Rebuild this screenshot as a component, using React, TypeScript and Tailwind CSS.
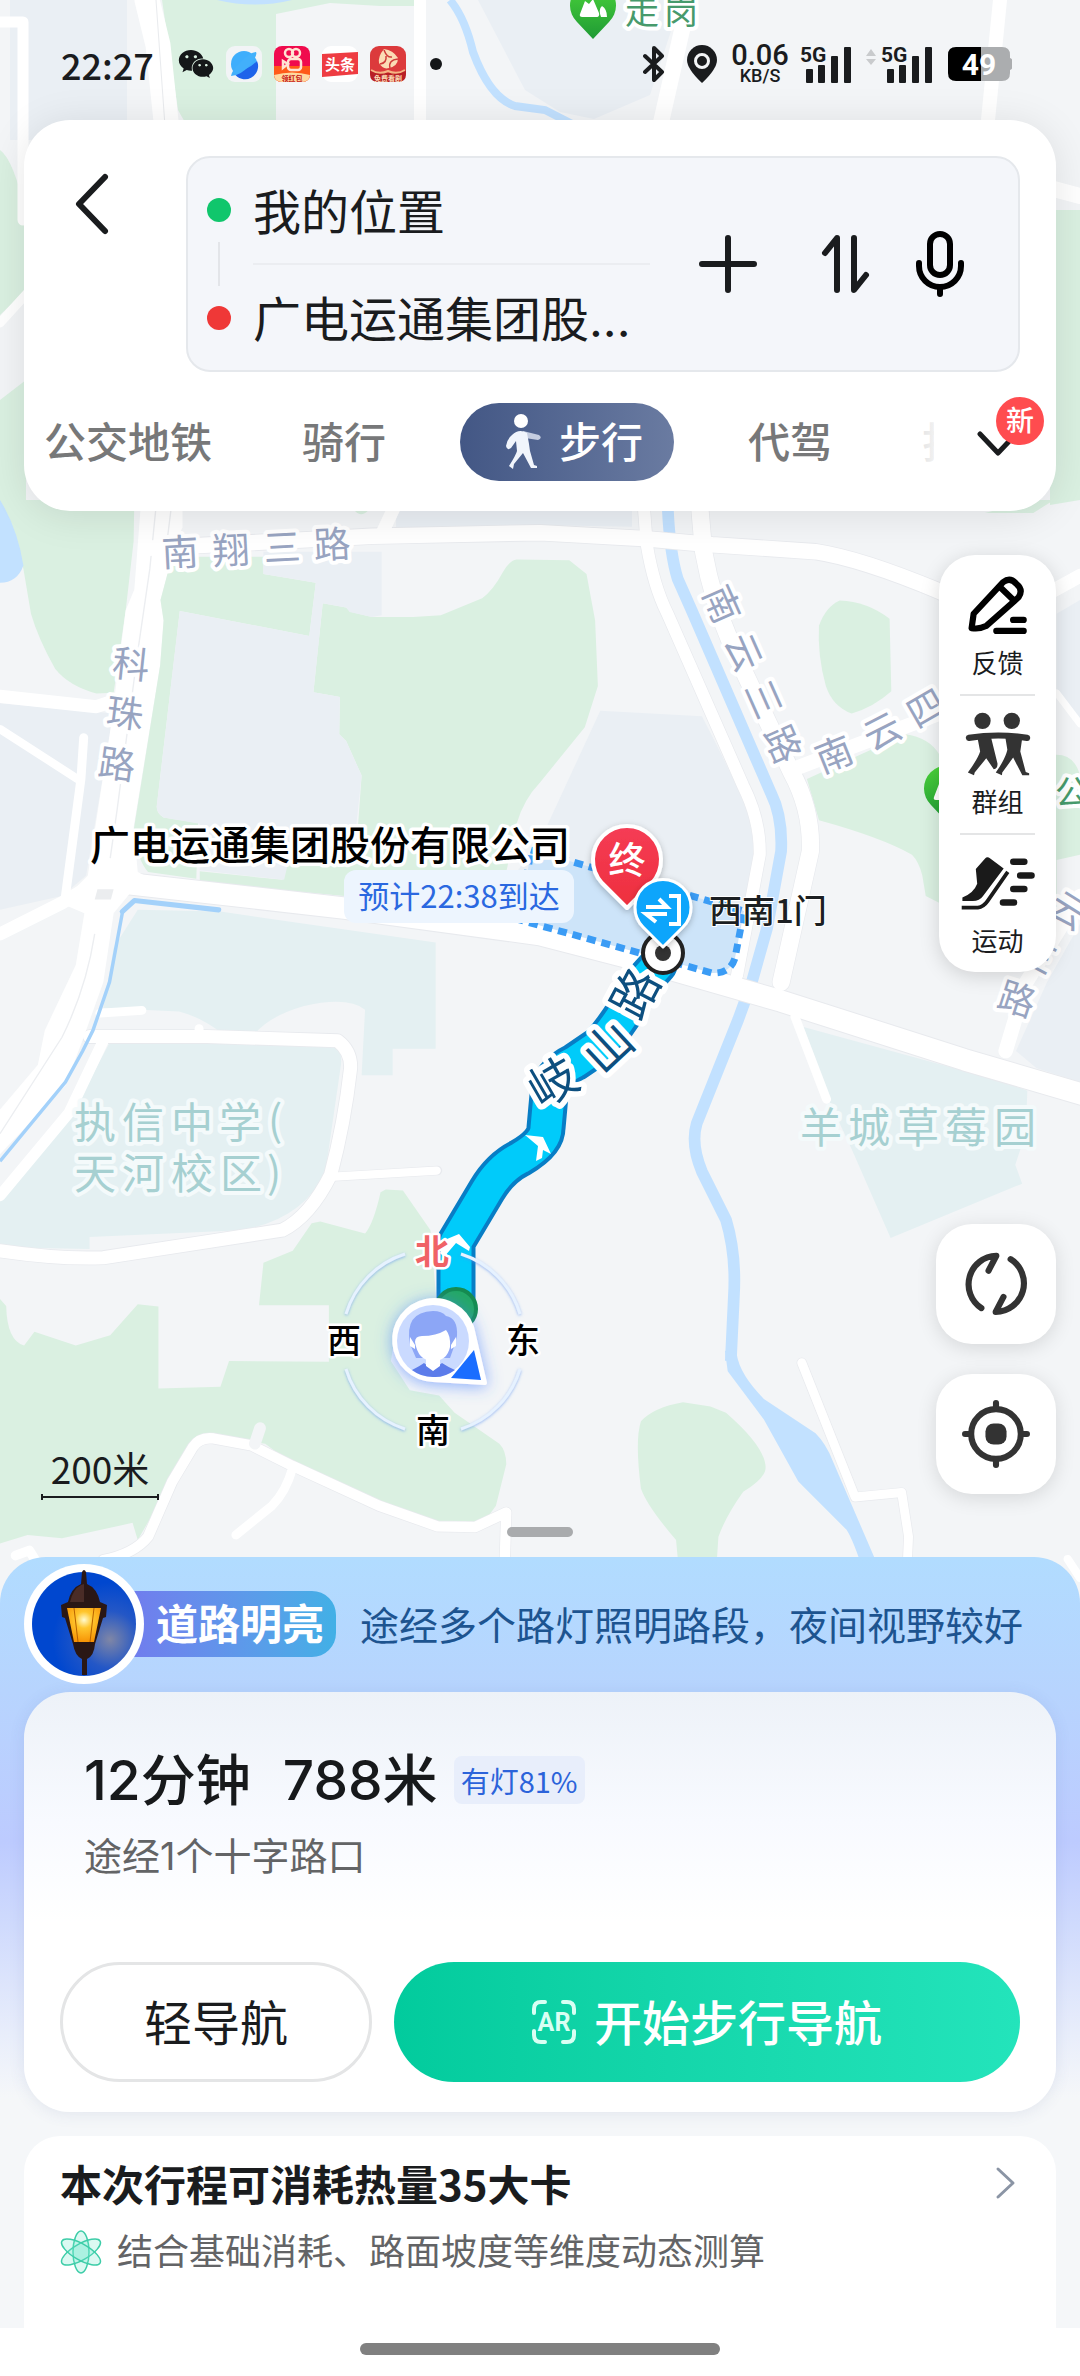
import type { ReactNode } from "react";
import { FaWeixin } from "react-icons/fa";

const SANS = "font-['Inter','Noto_Sans_CJK_SC',sans-serif]";
const CJK = "font-['Noto_Sans_CJK_SC',sans-serif]";

type Glyph = { ch: string; x: number; y: number; r?: number };

function Glyphs({
  items,
  size,
  color,
  halo = "#ffffff",
  haloWidth = 8,
  weight = 400,
}: {
  items: Glyph[];
  size: number;
  color: string;
  halo?: string;
  haloWidth?: number;
  weight?: number;
}) {
  return (
    <g
      fontSize={size}
      fill={color}
      stroke={halo}
      strokeWidth={haloWidth}
      strokeLinejoin="round"
      paintOrder="stroke"
      fontWeight={weight}
      textAnchor="middle"
    >
      {items.map((g, i) => (
        <text key={i} transform={`translate(${g.x} ${g.y}) rotate(${g.r ?? 0})`} dy="0.37em">
          {g.ch}
        </text>
      ))}
    </g>
  );
}

function ParkPin({ x, y }: { x: number; y: number }) {
  return (
    <g transform={`translate(${x} ${y})`}>
      <path d="M0 32 L-16 15 A23 23 0 1 1 16 15 Z" fill="url(#park)" />
      <path d="M-13 7 L-8 -6 L-4 -3 L0 -8 L6 6 Q7 10 3 10 H-11 Q-14 10 -13 7Z M8 10 Q5 2 9 -1 Q14 2 14 10Z" fill="#fff" />
    </g>
  );
}

const ROAD = { stroke: "#ffffff", fill: "none", strokeLinejoin: "round", strokeLinecap: "round" } as const;

function MapCanvas() {
  return (
    <svg
      className={`absolute inset-0 h-full w-full ${CJK}`}
      viewBox="0 0 1080 1600"
      preserveAspectRatio="xMidYMin slice"
      role="img"
      aria-label="步行路线地图"
    >
      <defs>
        <linearGradient id="park" x1="0" y1="0" x2="0" y2="1">
          <stop offset="0" stopColor="#4bd43a" />
          <stop offset="1" stopColor="#1f9a35" />
        </linearGradient>
        <linearGradient id="endpin" x1="0" y1="0" x2="0" y2="1">
          <stop offset="0" stopColor="#f53c55" />
          <stop offset="1" stopColor="#ee2f3d" />
        </linearGradient>
        <filter id="glow" x="-50%" y="-50%" width="200%" height="200%">
          <feDropShadow dx="0" dy="2" stdDeviation="8" floodColor="#3f7dff" floodOpacity="0.6" />
        </filter>
        <filter id="ring" x="-20%" y="-20%" width="140%" height="140%">
          <feDropShadow dx="0" dy="1" stdDeviation="1.5" floodColor="#4f8cf0" floodOpacity="0.6" />
        </filter>
        <filter id="soft" x="-50%" y="-50%" width="200%" height="200%">
          <feDropShadow dx="0" dy="2" stdDeviation="3" floodColor="#000" floodOpacity="0.25" />
        </filter>
      </defs>
      <rect width="1080" height="1600" fill="#f3f5f7" />

      {/* northern strip */}
      <rect x="10" y="0" width="117" height="140" fill="#eaeff4" />
      <path d="M162 0 H414 V6 L380 6 L330 3 L276 14 V140 H195 L178 110Z" fill="#daf0e1" />
      <path d="M217 0 Q255 9 292 0Z" fill="#c2e1ff" />
      <path d="M478 0 L525 90 L560 112 L594 119 L650 95 L672 28 L676 0Z" fill="#eaeff4" />
      <path d="M0 150 Q14 160 26 215 V290 L0 315Z M26 380 L0 400 V520 H26Z" fill="#daf0e1" />
      <path d="M1050 210 H1080 V500 L1050 505Z" fill="#daf0e1" />
      <path d="M450 0 Q465 18 473 52 Q490 98 515 106 L545 110 L580 128" stroke="#c2e1ff" strokeWidth="8" fill="none" />
      <g {...ROAD}>
        <path d="M0 22 H23 V220" strokeWidth="11" />
        <path d="M147 0 L158 45 L168 140" strokeWidth="25" />
        <path d="M156 0 L166 140" stroke="#e9ebee" strokeWidth="1" />
        <path d="M420 0 V140" strokeWidth="12" />
        <path d="M690 0 L682 30 L657 140" strokeWidth="16" />
        <path d="M1000 0 L986 140" strokeWidth="14" />
        <path d="M0 323 L30 290" strokeWidth="9" />
        <path d="M1050 188 L1080 196" strokeWidth="16" />
      </g>

      <g transform="translate(0 500) scale(0.3444)">
        {/* land use */}
        <g fill="#daf0e1">
          <path d="M0 0 L390 0 L388 120 L365 320 L330 560 L280 562 Q200 540 160 490 Q110 400 90 330 L68 200 Q40 80 0 0Z" />
          <path d="M937 300 L1005 312 L1020 325 L1080 340 L1200 340 L1280 335 L1400 285 Q1430 265 1460 210 Q1480 175 1500 173 L1653 175 L1703 215 L1728 350 L1736 540 L1698 660 L1568 820 Q1520 870 1500 940 L1470 1080 L1400 1180 L1000 1150 L580 1110 L580 1078 L820 1103 L830 1060 L1040 940 L1050 800 L1005 700 L985 680 L987 572 L910 558Z" />
          <path d="M2438 292 Q2518 295 2583 345 L2588 555 Q2538 600 2473 620 Q2418 600 2398 540 Q2373 450 2378 365 Q2398 310 2438 292Z" />
          <path d="M2343 810 L2628 680 Q2700 690 2728 740 H3068 Q3120 740 3136 800 V1030 L3068 1045 V1180 L2728 1170 L2688 1150 L2678 1090 Q2668 1050 2648 1030 Q2560 980 2378 930Z" />
          <path d="M1025 25 Q1045 55 1070 30Z M3000 0 H3060 L3000 38 H2860Z" />
          <path d="M0 2320 L18 2340 Q20 2440 70 2455 L100 2415 L220 2455 L320 2425 L400 2335 L460 2342 V2580 L640 2575 L665 2500 L955 2502 V2338 L752 2338 L765 2215 L850 2180 L905 2100 L930 2095 L1060 2130 Q1085 2100 1105 2010 L1120 2002 L1170 2005 L1250 2120 L1270 2360 L1150 2410 L1135 2500 L1190 2585 L1275 2600 L1320 2650 L1450 2740 Q1470 2760 1470 2800 L1440 2920 L1400 2975 L1250 2965 L850 2800 L770 2740 L735 2735 L600 2710 L560 2740 L480 2880 L400 3020 L385 2970 L180 3015 L80 3005 L0 3030Z" />
          <path d="M1983 2620 Q1898 2635 1861 2675 Q1843 2730 1861 2870 Q1878 2920 1963 3020 L1976 3160 H2076 L2086 3010 Q2108 2950 2158 2880 Q2223 2840 2223 2810 Q2223 2750 2108 2650 L2063 2632Z" />
        </g>
        <path d="M0 0 Q50 80 68 190 Q50 240 0 240Z" fill="#c2e1ff" />
        <g fill="#eaeff4">
          <path d="M1150 0 H1835 V78 L1500 72 L1150 85Z" />
          <path d="M0 590 L330 620 L250 1090 L180 1150 L0 1190Z" />
          <path d="M1743 612 L2038 628 Q2128 800 2168 900 Q2193 980 2188 1080 L2158 1200 H1500 V1080 L1568 990Z" />
          <path d="M3068 330 L3136 290 V660 L3068 560Z" />
          <path d="M3136 1230 L3040 1400 L2950 1600 L3010 1650 L3136 1690Z" />
        </g>
        <g fill="#e4f0f2">
          <path d="M400 1190 L640 1195 L1265 1285 V1593 H1140 V1670 H1050 L1060 1480 Q1010 1440 880 1470 Q780 1500 740 1550 L640 1545 Q580 1500 520 1485 L300 1475 L330 1300Z" />
          <path d="M320 1572 L960 1585 Q995 1590 990 1640 L945 1950 Q880 2090 700 2120 L260 2140 V2175 L0 2170 V2010 L200 1800Z" />
          <path d="M2333 1530 L2918 1690 L2983 1715 L2978 1840 L2948 1930 L2968 1985 L2586 2143 L2473 1885 L2403 1735Z" />
        </g>

        {/* water */}
        <g stroke="#c2e1ff" fill="none" strokeWidth="34" strokeLinejoin="round">
          <path d="M1938 0 Q1943 150 1968 230 L2008 320 L2238 850 Q2273 920 2268 1020 L2228 1240 L2183 1400 L2143 1510 L2023 1810 Q2005 1870 2038 1950 L2108 2090 Q2138 2190 2131 2310 L2122 2500" />
        </g>
        <path d="M2105 2470 L2139 2480 Q2148 2540 2218 2610 L2368 2710 Q2398 2740 2418 2790 L2560 3120 H2510 Q2478 3020 2458 2990 L2318 2850 L2218 2670 L2113 2530Z" fill="#c2e1ff" />

        {/* road outlines */}
        <g {...ROAD} stroke="#e8eaee">
          <path d="M430 140 L1080 105 L1568 95 L1868 112 L2068 130 L2368 150 Q2500 170 2728 265 L2900 350" strokeWidth="50" />
          <path d="M340 1110 L1000 1185 L1568 1262 L1868 1340 L2268 1455 L2800 1625 L3140 1725" strokeWidth="68" />
          <path d="M260 1558 L600 1558 L980 1570 Q1020 1600 1018 1650 Q1000 1810 960 1960 Q900 2080 820 2120 L300 2200 Q170 2205 0 2180" strokeWidth="43" />
          <path d="M300 3078 Q390 3060 430 3010 L500 2850 L560 2750 Q580 2720 620 2725 L730 2745 L850 2805 L1100 2920 L1270 2980 L1380 2982 L1470 2940 L1465 3100" strokeWidth="34" />
          <path d="M2328 2505 L2483 2895 L2618 2882 L2638 3010 L2633 3120" strokeWidth="30" />
          <path d="M1868 0 L1878 130 Q1898 250 1938 330 L2158 830 Q2208 930 2206 1030 L2140 1380" strokeWidth="39" />
          <path d="M2030 0 L2043 150 Q2068 290 2128 430 L2298 790 Q2358 900 2353 1020 L2268 1400" strokeWidth="54" />
          <path d="M970 1965 L1270 1947" strokeWidth="28" />
        </g>
        <path d="M410 0 H530 V80 L500 140 L490 200 L466 290 L475 350 L465 480 L388 950 L400 1080 L420 1090 L330 1200 L300 1400 L240 1568 L190 1700 L0 1900 V1770 L110 1640 L130 1540 L220 1350 L245 1200 L175 1170 L255 1090 L320 670 L365 320 L390 260Z" fill="#fff" />
        <g fill="none" stroke="#eceef1" strokeWidth="4">
          <path d="M455 0 L435 200 L400 440 L340 900 L320 1040" />
          <path d="M275 1260 Q250 1420 180 1560 L0 1840" />
          <path d="M500 0 L485 120" />
        </g>
        <path
          d="M490 165 L765 165 L765 215 L917 240 L898 395 L522 322 L455 890 Q455 910 475 922 L575 938 L570 1100 L430 1080 Q400 1050 388 960 L465 480 L475 350 L466 290 L490 200Z"
          fill="#daf0e1"
        />
        <path
          d="M522 322 L898 395 L917 240 L765 215 V150 L1108 150 V335 L1080 340 L1015 325 L1005 312 L937 300 L910 558 L987 572 L985 680 L1005 700 L1050 800 L1035 940 L835 1060 L825 1103 L580 1075 L580 940 L475 922 Q455 910 455 890Z"
          fill="#eaeff4"
        />
        <g {...ROAD}>
          <path d="M430 140 L1080 105 L1568 95 L1868 112 L2068 130 L2368 150 Q2500 170 2728 265 L2900 350" strokeWidth="45" />
          <path d="M2900 350 L3136 220" strokeWidth="40" />
          <path d="M1110 95 L1155 0" strokeWidth="38" />
          <path d="M0 570 L280 600 L340 580" strokeWidth="38" />
          <path d="M0 665 L225 810" strokeWidth="24" />
          <path d="M243 690 L235 810 L190 1150" strokeWidth="26" />
          <path d="M0 1260 L180 1170 L280 1110" strokeWidth="38" />
          <path d="M340 1110 L1000 1185 L1568 1262 L1868 1340 L2268 1455 L2800 1625 L3140 1725" strokeWidth="62" />
          <path d="M1868 0 L1878 130 Q1898 250 1938 330 L2158 830 Q2208 930 2206 1030 L2140 1380" strokeWidth="35" />
          <path d="M2030 0 L2043 150 Q2068 290 2128 430 L2298 790 Q2358 900 2353 1020 L2268 1400" strokeWidth="50" />
          <path d="M2308 780 L2728 620 L2960 480" strokeWidth="42" />
          <path d="M3068 560 L3136 650" strokeWidth="20" />
          <path d="M3136 1150 L2980 1400 L2920 1600" strokeWidth="42" />
          <path d="M2308 1500 L2400 1740" strokeWidth="26" />
          <path d="M290 1490 L412 1482" strokeWidth="26" />
          <path d="M578 1535 V1560" strokeWidth="26" />
          <path d="M260 1558 L600 1558 L980 1570 Q1020 1600 1018 1650 Q1000 1810 960 1960 Q900 2080 820 2120 L300 2200 Q170 2205 0 2180" strokeWidth="38" />
          <path d="M300 1570 L200 1780 L0 2020" strokeWidth="32" />
          <path d="M970 1965 L1268 1947" strokeWidth="24" />
          <path d="M300 3078 Q390 3060 430 3010 L500 2850 L560 2750 Q580 2720 620 2725 L730 2745 L850 2805 L1100 2920 L1270 2980 L1380 2982 L1470 2940 L1465 3100" strokeWidth="30" />
          <path d="M850 2810 Q830 2880 790 2920 L685 3005" strokeWidth="26" />
          <path d="M755 2695 L740 2740" strokeWidth="34" stroke="#f3f5f7" />
          <path d="M45 3065 L85 3050 L110 3090" strokeWidth="28" />
          <path d="M2328 2505 L2483 2895 L2618 2882 L2638 3010 L2633 3120" strokeWidth="26" />
          <path d="M3100 3075 L3136 3130" strokeWidth="24" />
        </g>
        <path d="M283 1130 H330 L322 1160 H275Z" fill="#ebedef" />
        <path d="M355 1195 L390 1163 L635 1190" stroke="#a3d1fa" strokeWidth="15" fill="none" strokeLinecap="round" strokeLinejoin="round" />
        <path d="M356 1195 L318 1400 L270 1540 L240 1600 L190 1690 L0 1920" stroke="#a3d1fa" strokeWidth="10" fill="none" />
      </g>

      {/* place names */}
      <ParkPin x={593} y={7} />
      <ParkPin x={947} y={790} />
      <Glyphs size={34} color="#479a6c" items={[{ ch: "走", x: 642, y: 11 }, { ch: "岗", x: 681, y: 11 }, { ch: "公", x: 1072, y: 792 }]} />
      <Glyphs
        size={37}
        color="#98a4c1"
        items={[
          { ch: "南", x: 180, y: 552, r: -3 },
          { ch: "翔", x: 231, y: 550, r: -3 },
          { ch: "三", x: 282, y: 547, r: -3 },
          { ch: "路", x: 332, y: 544, r: -3 },
          { ch: "科", x: 131, y: 664, r: 6 },
          { ch: "珠", x: 125, y: 713, r: 7 },
          { ch: "路", x: 117, y: 764, r: 8 },
          { ch: "南", x: 722, y: 604, r: 66 },
          { ch: "云", x: 744, y: 652, r: 66 },
          { ch: "三", x: 764, y: 699, r: 66 },
          { ch: "路", x: 783, y: 744, r: 66 },
          { ch: "南", x: 834, y: 754, r: -22 },
          { ch: "云", x: 882, y: 731, r: -27 },
          { ch: "四", x: 926, y: 708, r: -30 },
          { ch: "云", x: 1069, y: 910, r: 32 },
          { ch: "三", x: 1038, y: 955, r: 28 },
          { ch: "路", x: 1017, y: 999, r: 18 },
        ]}
      />
      <Glyphs
        size={42}
        color="#a6d0d1"
        halo="#f4fafb"
        items={[
          { ch: "执", x: 95, y: 1122 },
          { ch: "信", x: 143, y: 1122 },
          { ch: "中", x: 192, y: 1122 },
          { ch: "学", x: 240, y: 1122 },
          { ch: "(", x: 275, y: 1120 },
          { ch: "天", x: 95, y: 1173 },
          { ch: "河", x: 143, y: 1173 },
          { ch: "校", x: 192, y: 1173 },
          { ch: "区", x: 241, y: 1173 },
          { ch: ")", x: 274, y: 1172 },
          { ch: "羊", x: 821, y: 1127 },
          { ch: "城", x: 869, y: 1127 },
          { ch: "草", x: 918, y: 1127 },
          { ch: "莓", x: 966, y: 1127 },
          { ch: "园", x: 1015, y: 1127 },
        ]}
      />

      {/* destination area */}
      <path d="M531 850 L744 911 L735 958 Q730 974 712 973 L520 920Z" fill="#cde4f9" />
      <path d="M531 850 L744 911 L735 958 Q730 974 712 973 L520 920Z" fill="none" stroke="#3b9cf5" strokeWidth="7" strokeDasharray="9 6" />

      {/* route */}
      <g fill="none" strokeLinejoin="round" strokeLinecap="round">
        <path d="M456 1309 V1242 L487 1190 Q500 1168 520 1158 Q546 1143 546 1128 L549 1095 Q550 1074 575 1062 L600 1045 Q622 1020 640 985 L658 965" stroke="#087dc5" strokeWidth="39" />
        <path d="M456 1309 V1242 L487 1190 Q500 1168 520 1158 Q546 1143 546 1128 L549 1095 Q550 1074 575 1062 L600 1045 Q622 1020 640 985 L658 965" stroke="#00cbfa" strokeWidth="31" />
      </g>
      <path d="M440 1253 L447 1239 L459 1234 L470 1247 L469 1251 L456 1243 L444 1257Z" fill="#fff" />
      <path d="M525 1135 L543 1137 L551 1154 L543 1150 L542 1158 L536 1161 L538 1146Z" fill="#fff" />
      <Glyphs
        size={48}
        color="#0d4f7f"
        haloWidth={11}
        items={[
          { ch: "岐", x: 553, y: 1082, r: -30 },
          { ch: "山", x: 608, y: 1047, r: -43 },
          { ch: "路", x: 635, y: 993, r: -62 },
        ]}
      />

      <circle cx="663" cy="953" r="20" fill="#fff" stroke="#222" strokeWidth="4" />
      <circle cx="663" cy="953" r="8" fill="#333" />
      <g filter="url(#soft)">
        <path d="M627 908 L602 883 A34 34 0 1 1 652 883Z" fill="url(#endpin)" stroke="#fff" strokeWidth="4" strokeLinejoin="round" />
      </g>
      <Glyphs size={37} color="#fff" halo="none" haloWidth={0} weight={500} items={[{ ch: "终", x: 627, y: 860 }]} />
      <g filter="url(#soft)">
        <path d="M663 947 L643 927 A28 28 0 1 1 683 927Z" fill="#0aa5fb" stroke="#fff" strokeWidth="3" strokeLinejoin="round" />
      </g>
      <path d="M646 907 H667 L659 899 M667 914 H646 L656 922 M669 896 H679 V924 H669" fill="none" stroke="#fff" strokeWidth="4" />

      <rect x="344" y="870" width="230" height="53" rx="12" fill="#edf5fe" />
      <text x="459" y="908" fontSize="31" fill="#2a68e0" textAnchor="middle">
        预计22:38到达
      </text>
      <g fill="#000" stroke="#fff" paintOrder="stroke" strokeLinejoin="round">
        <text x="90" y="860" fontSize="40" fontWeight="500" strokeWidth="7">
          广电运通集团股份有限公司
        </text>
        <text x="709" y="923" fontSize="33" fontWeight="500" fill="#1c1f22" strokeWidth="2">
          西南1门
        </text>
      </g>

      {/* compass and current position */}
      <circle cx="456" cy="1309" r="20" fill="#24a865" stroke="#158c50" strokeWidth="4" />
      <path
        filter="url(#ring)"
        d="M346 1314 A90 90 0 0 1 405 1254 M461 1254 A90 90 0 0 1 520 1314 M520 1369 A90 90 0 0 1 461 1429 M405 1429 A90 90 0 0 1 346 1369"
        fill="none"
        stroke="#e6f2ff"
        strokeWidth="3"
      />
      <path filter="url(#glow)" d="M472 1327 L485 1383 L433 1380 A40 40 0 1 1 472 1327Z" fill="#fff" stroke="#fff" strokeWidth="4" strokeLinejoin="round" />
      <path d="M474 1350 L481 1380 L451 1378Z" fill="#1a6dff" />
      <circle cx="433" cy="1341" r="36" fill="#cadaff" />
      <path d="M412 1370 Q420 1366 424 1363 L433 1370 L442 1363 Q448 1367 455 1370 Q444 1378 433 1377 Q421 1377 412 1370Z" fill="#5c7cea" />
      <path d="M410 1344 Q404 1312 433 1311 Q442 1311 446 1316 Q458 1318 457 1336 L455 1344 L450 1358 H416Z" fill="#8ca6f6" />
      <path d="M410 1337 L415 1345 V1349 L410 1346Z M456 1337 L451 1345 V1349 L456 1346Z M415 1342 Q415 1336 422 1336 Q436 1336 446 1330 Q451 1336 450 1347 Q447 1361 433 1361 Q418 1361 415 1342Z M426 1359 H440 V1366 L433 1371 L426 1366Z" fill="#fff" />
      <Glyphs size={34} color="#000" haloWidth={5} weight={500} items={[{ ch: "西", x: 344, y: 1340 }, { ch: "东", x: 523, y: 1340 }, { ch: "南", x: 433, y: 1430 }]} />
      <Glyphs size={34} color="#f06266" haloWidth={5} weight={700} items={[{ ch: "北", x: 432, y: 1251 }]} />
    </svg>
  );
}

function Signal() {
  return (
    <svg width="53" height="40" viewBox="0 0 53 40" fill="#1a1c1e" aria-hidden="true">
      <text x="0" y="18" fontSize="21" fontWeight="700" fontFamily="Roboto, sans-serif">
        5G
      </text>
      <rect x="6" y="25" width="7" height="14" rx="1" />
      <rect x="18" y="21" width="7" height="18" rx="1" />
      <rect x="31" y="12" width="7" height="27" rx="1" />
      <rect x="44" y="3" width="7" height="36" rx="1" />
    </svg>
  );
}

function StatusBar() {
  return (
    <div className="flex h-30 items-center pt-2 pr-[68px] pl-[61px]">
      <time className={`text-[36px] leading-10 font-medium text-[#1a1c1e] ${CJK}`}>22:27</time>
      <div className="ml-6 flex items-center gap-3">
        <FaWeixin className="size-9 text-[#151719]" />
        <svg width="36" height="36" viewBox="0 0 36 36">
          <rect width="36" height="36" rx="9" fill="#f2f4f6" />
          <circle cx="18" cy="18" r="13" fill="#3eaefc" />
          <path d="M31 15 A13 13 0 0 1 8 27 Q22 24 31 15Z" fill="#1e63ea" />
          <path d="M5 30 Q6 24 14 17 Q24 6 30 6 Q32 9 24 19 Q14 30 5 30Z" fill="#42b0fb" />
        </svg>
        <svg width="36" height="36" viewBox="0 0 36 36" fontFamily="'Noto Sans CJK SC', sans-serif">
          <rect width="36" height="36" rx="8" fill="#f00b4d" />
          <path d="M0 20 H36 V28 Q36 36 28 36 H8 Q0 36 0 28Z" fill="#ff5a18" />
          <path d="M0 29 Q18 24 36 29 Q35 36 28 36 H8 Q1 36 0 29Z" fill="#ffd9a0" />
          <g fill="none" stroke="#ffe3d3" strokeWidth="2.5">
            <circle cx="15" cy="7" r="4" />
            <circle cx="22" cy="7" r="4" />
            <rect x="14" y="13" width="13" height="11" rx="3" />
            <path d="M14 18 L9 15 V22Z" />
          </g>
          <text x="18" y="35" fontSize="7" fontWeight="700" textAnchor="middle" fill="#c61414">
            领红包
          </text>
        </svg>
        <svg width="36" height="36" viewBox="0 0 36 36" fontFamily="'Noto Sans CJK SC', sans-serif">
          <rect width="36" height="36" rx="9" fill="#fff" />
          <path d="M0 8 L36 6 V28 L0 31Z" fill="#ee3c42" />
          <text x="18" y="24" fontSize="15" fontWeight="700" textAnchor="middle" fill="#fff">
            头条
          </text>
        </svg>
        <svg width="36" height="36" viewBox="0 0 36 36" fontFamily="'Noto Sans CJK SC', sans-serif">
          <rect width="36" height="36" rx="9" fill="#dc3a3c" />
          <path d="M0 24 Q18 30 36 24 V28 Q36 36 28 36 H8 Q0 36 0 28Z" fill="#b81f25" />
          <path d="M14 3 Q8 10 9 17 Q13 24 19 22 Q28 20 28 12 Q23 4 14 3Z" fill="#fbdcb5" />
          <path d="M14 4 Q17 12 22 11 M28 13 Q18 14 20 22 M10 18 Q17 17 16 10" stroke="#cf3b39" strokeWidth="1.5" fill="none" />
          <path d="M1 24 Q9 29 18 25 Q27 29 35 24" stroke="#f5b583" strokeWidth="2" fill="none" />
          <text x="18" y="35" fontSize="7" fontWeight="700" textAnchor="middle" fill="#fbdcb5">
            免费看剧
          </text>
        </svg>
      </div>
      <span className="ml-6 size-3 rounded-full bg-[#151719]" />
      <div className="ml-auto flex items-center">
        <svg width="22" height="38" viewBox="0 0 22 38" fill="none" stroke="#1a1c1e" strokeWidth="4" strokeLinejoin="round" strokeLinecap="round">
          <path d="M2 11 L19 27 L11 35 V3 L19 11 L2 27" />
        </svg>
        <svg className="ml-[21px]" width="32" height="38" viewBox="0 0 32 38">
          <path d="M16 38 Q1 24 1 15 A15 15 0 1 1 31 15 Q31 24 16 38Z" fill="#1a1c1e" />
          <circle cx="16" cy="16" r="6.5" fill="#1a1c1e" stroke="#f3f5f7" strokeWidth="3" />
        </svg>
        <span className="ml-3 flex w-15 flex-col items-center font-['Roboto',sans-serif] text-[#1a1c1e]">
          <span className="text-[29px] leading-6 font-medium">0.06</span>
          <span className="text-[18px] leading-[18px] font-medium">KB/S</span>
        </span>
        <span className="ml-2.5">
          <Signal />
        </span>
        <svg className="ml-3" width="12" height="30" viewBox="0 0 12 30" fill="#c9cbcd">
          <path d="M6 0 L11 7 H1Z M6 16 L11 10 H1Z" />
        </svg>
        <span className="ml-1">
          <Signal />
        </span>
        <svg className="ml-3.5" width="64" height="34" viewBox="0 0 64 34" fontFamily="Roboto, sans-serif">
          <path d="M33 0 H54 Q62 0 62 8 V11 Q65 12 65 17 Q65 22 62 23 V26 Q62 34 54 34 H33Z" fill="#abadaf" />
          <path d="M8 0 H33 V34 H8 Q0 34 0 26 V8 Q0 0 8 0Z" fill="#000" />
          <text x="31" y="28" fontSize="30" fontWeight="700" textAnchor="middle" fill="#fff">
            49
          </text>
        </svg>
      </div>
    </div>
  );
}

function Tab({ children }: { children: ReactNode }) {
  return (
    <button type="button" role="tab" aria-selected="false" className="shrink-0 px-4 text-[42px] font-medium whitespace-nowrap text-[#777879]">
      {children}
    </button>
  );
}

function SearchCard() {
  return (
    <header className="relative mx-6 rounded-[46px] bg-white pt-9 pb-[30px] shadow-[0_4px_40px_rgba(0,0,0,0.10)]">
      <div className="flex items-start pr-9">
        <button type="button" aria-label="返回" className="w-[162px] pt-4 pl-12">
          <svg width="40" height="64" viewBox="0 0 40 64" fill="none" stroke="#1a1c1e" strokeWidth="6" strokeLinecap="round" strokeLinejoin="round">
            <path d="M33 5 L7 32 L33 59" />
          </svg>
        </button>
        <div className="flex flex-1 items-center rounded-[24px] border-2 border-[#e5e8ec] bg-[#f4f6fa] py-[17px] pr-[54px] pl-[19px]">
          <div className="flex flex-col items-center gap-5 pr-[22px]">
            <span className="size-6 rounded-full bg-[#10c66c]" />
            <span className="h-11 w-[2px] bg-[#e3e5e9]" />
            <span className="size-6 rounded-full bg-[#ef3837]" />
          </div>
          <div className="flex min-w-0 flex-1 flex-col">
            <input
              aria-label="起点"
              defaultValue="我的位置"
              className="h-[72px] w-full bg-transparent pt-1 text-[48px] text-[#1a1c1e] outline-none"
            />
            <hr className="my-4 h-[2px] border-0 bg-[#ebedf1]" />
            <input
              aria-label="终点"
              defaultValue="广电运通集团股..."
              className="h-[72px] w-full bg-transparent pt-1.5 text-[48px] text-[#1a1c1e] outline-none"
            />
          </div>
          <div className="ml-12 flex items-center">
            <button type="button" aria-label="添加途经点">
              <svg width="60" height="60" viewBox="0 0 60 60" stroke="#1a1c1e" strokeWidth="6" strokeLinecap="round">
                <path d="M30 4 V56 M4 30 H56" />
              </svg>
            </button>
            <button type="button" aria-label="交换起终点" className="ml-[60px]">
              <svg width="56" height="64" viewBox="0 0 56 64" fill="none" stroke="#1a1c1e" strokeWidth="6" strokeLinecap="round" strokeLinejoin="round">
                <path d="M19 58 V6 L7 21 M36 6 V58 L48 43" />
              </svg>
            </button>
            <button type="button" aria-label="语音输入" className="ml-[42px]">
              <svg width="48" height="66" viewBox="0 0 48 66" fill="none" stroke="#000" strokeWidth="6" strokeLinecap="round">
                <rect x="14" y="3" width="20" height="41" rx="10" />
                <path d="M3 32 V35 A21 21 0 0 0 45 35 V32 M24 56 V63" />
              </svg>
            </button>
          </div>
        </div>
      </div>
      <div className="mt-[31px] flex items-center">
        <div role="tablist" aria-label="出行方式" className="relative flex min-w-0 flex-1 items-center gap-[58px] overflow-hidden pl-1">
          <Tab>公交地铁</Tab>
          <Tab>骑行</Tab>
          <button
            type="button"
            role="tab"
            aria-selected="true"
            className="flex h-[78px] shrink-0 items-center gap-4 rounded-full bg-linear-to-r from-[#435785] to-[#6a7ba1] pr-[31px] pl-[43px] text-[42px] font-medium whitespace-nowrap text-white"
          >
            <svg width="40" height="58" viewBox="0 0 40 58">
              <circle cx="18" cy="8" r="7" fill="#fff" />
              <path d="M20 18 L36 22 Q40 25 35 27 L22 25Z" fill="#c5cde0" />
              <path
                d="M9 22 Q16 15 24 20 Q26 30 27 38 L31 52 L34 53 V55 H28 L20 40 L11 51 L10 56 L6 53 Q13 42 14 38 L13 28 L8 35 Q4 38 3 33 Q4 26 9 22Z"
                fill="#f1f5fc"
              />
            </svg>
            步行
          </button>
          <Tab>代驾</Tab>
          <Tab>打车</Tab>
          <span className="pointer-events-none absolute inset-y-0 right-0 w-6 bg-linear-to-r from-white/70 to-white/90" />
        </div>
        <button type="button" aria-label="更多出行方式" className="relative w-[122px] pl-[39px]">
          <svg width="52" height="34" viewBox="0 0 52 34" fill="none" stroke="#1a1c1e" strokeWidth="5" strokeLinecap="round" strokeLinejoin="round">
            <path d="M7 9 L25 28 L43 9" />
          </svg>
          <span className="absolute -top-7 right-3 flex size-12 items-center justify-center rounded-full bg-[#ff4c4f] text-[28px] font-medium text-white">新</span>
        </button>
      </div>
    </header>
  );
}

function SideItem({ label, children }: { label: string; children: ReactNode }) {
  return (
    <button type="button" className="flex h-[137px] flex-col items-center justify-between pt-3.5 pb-3 text-[26px] leading-9 text-[#1a1c1e]">
      <span className="flex h-17 items-center">{children}</span>
      {label}
    </button>
  );
}

function MapControls() {
  return (
    <div className="relative grid grid-cols-3 items-end px-6 pt-11 pb-[63px]">
      <div className="mb-9 ml-[17px] w-[118px] text-center text-[37px] leading-10 text-[#1a1c1e]">
        <span className={CJK}>200米</span>
        <svg className="mt-0.5 block" width="118" height="8" viewBox="0 0 118 8" stroke="#1a1c1e" strokeWidth="2">
          <path d="M1 1 V7 M1 4 H117 M117 1 V7" />
        </svg>
      </div>
      <span className="h-2.5 w-[66px] justify-self-center rounded-full bg-[#a9abad]" />
      <div className="mb-[43px] flex flex-col items-end justify-self-end">
        <div className="flex w-[117px] flex-col items-center rounded-[36px] bg-white pt-0.5 shadow-[0_4px_20px_rgba(0,0,0,0.15)]">
          <SideItem label="反馈">
            <svg width="62" height="60" viewBox="1235 215 180 175" fill="none" stroke="#000" strokeWidth="18" strokeLinecap="round" strokeLinejoin="round">
              <path d="M1248 370 L1254 328 L1340 236 Q1360 220 1378 240 Q1400 258 1385 280 L1290 364 Q1270 374 1248 370Z M1333 252 L1370 288 M1369 346 H1400 M1320 378 H1400" />
            </svg>
          </SideItem>
          <span className="h-[2px] w-[75px] bg-[#e4e5e6]" />
          <SideItem label="群组">
            <svg width="66" height="64" viewBox="1232 614 193 188" fill="#333">
              <circle cx="1283" cy="640" r="24" />
              <circle cx="1369" cy="640" r="24" />
              <path d="M1243 690 Q1330 676 1414 690" fill="none" stroke="#333" strokeWidth="18" strokeLinecap="round" />
              <path d="M1268 688 H1308 L1327 765 Q1328 780 1316 782 L1294 750 L1260 792 L1258 800 L1240 792 Q1270 750 1276 730Z" />
              <path d="M1350 688 H1400 L1394 730 L1410 790 L1420 794 V800 H1400 L1373 748 L1341 792 L1340 800 L1322 792 Q1350 752 1356 725Z" />
            </svg>
          </SideItem>
          <span className="h-[2px] w-[75px] bg-[#e4e5e6]" />
          <SideItem label="运动">
            <svg width="74" height="54" viewBox="1221 1034 215 157" fill="#1a1a1a">
              <path d="M1264 1072 L1291 1041 Q1297 1034 1306 1041 L1345 1070 L1285 1150 Q1275 1165 1255 1165 L1225 1165 V1155 Q1258 1142 1268 1115Z" />
              <path d="M1223 1184 H1270 Q1286 1182 1298 1165 L1357 1080" fill="none" stroke="#1a1a1a" strokeWidth="11" />
              <path d="M1373 1051 H1405 M1393 1091 H1426 M1373 1130 H1405 M1343 1169 H1375" stroke="#1a1a1a" strokeWidth="19" strokeLinecap="round" />
            </svg>
          </SideItem>
        </div>
        <button type="button" aria-label="刷新路线" className="mt-[252px] flex size-30 items-center justify-center rounded-[36px] bg-white shadow-[0_4px_20px_rgba(0,0,0,0.12)]">
          <svg width="68" height="68" viewBox="1224 667 200 200" fill="none" stroke="#333" strokeWidth="18" strokeLinecap="round" strokeLinejoin="round">
            <path d="M1281 838 A84 84 0 0 1 1325 684 L1302 728 M1367 694 A84 84 0 0 1 1323 849 L1346 805" />
          </svg>
        </button>
        <button type="button" aria-label="定位" className="mt-[30px] flex size-30 items-center justify-center rounded-[36px] bg-white shadow-[0_4px_20px_rgba(0,0,0,0.12)]">
          <svg width="68" height="68" viewBox="1224 1102 200 200" fill="none" stroke="#333" strokeWidth="18" strokeLinecap="round">
            <circle cx="1324" cy="1202" r="73" />
            <path d="M1324 1111 V1125 M1324 1279 V1293 M1233 1202 H1247 M1401 1202 H1415" />
            <rect x="1293" y="1171" width="62" height="62" rx="24" fill="#333" stroke="none" />
          </svg>
        </button>
      </div>
    </div>
  );
}

function LanternBadge() {
  return (
    <svg className="relative size-30 shrink-0" viewBox="0 0 120 120" aria-hidden="true">
      <defs>
        <radialGradient id="night" cx="0.75" cy="0.65" r="0.55">
          <stop offset="0" stopColor="#7f86a6" />
          <stop offset="0.5" stopColor="#2457c6" />
          <stop offset="1" stopColor="#0047cf" />
        </radialGradient>
        <radialGradient id="lamp" cx="0.5" cy="0.35" r="0.7">
          <stop offset="0" stopColor="#fffbd0" />
          <stop offset="0.35" stopColor="#ffc62d" />
          <stop offset="1" stopColor="#f68d00" />
        </radialGradient>
      </defs>
      <circle cx="60" cy="60" r="60" fill="#fff" />
      <circle cx="60" cy="60" r="52" fill="url(#night)" />
      <path d="M58 8 Q60 4 62 8 L63 20 Q73 24 76 38 L83 41 L82 53 L79 54 L71 80 Q70 92 63 95 V111 H58 V95 Q51 92 49 80 L41 54 L38 53 L37 41 L44 38 Q47 24 57 20Z" fill="#2a1715" />
      <path d="M57 21 Q49 25 46 38 H60 V20Z" fill="#4a2c27" />
      <path d="M43 44 H77 L70 78 H50Z" fill="url(#lamp)" />
      <path d="M50 44 L54 78 M70 44 L66 78" stroke="#b96200" strokeWidth="1" />
    </svg>
  );
}

function RouteSheet() {
  return (
    <main className="relative -mt-[43px] flex-1 rounded-t-[46px] bg-[linear-gradient(180deg,#b1dcff_0px,#b7d4fe_135px,#bdcbff_285px,#cfdafd_365px,#e9eefb_480px,#f5f7f9_540px)] pt-[7px]">
      <div className="flex items-center px-6">
        <LanternBadge />
        <strong className="-ml-7 flex h-[66px] items-center rounded-r-[24px] bg-linear-to-r from-[#7278ee] to-[#41b0e6] pr-3 pl-10 text-[42px] font-bold text-white">道路明亮</strong>
        <p className="ml-6 pt-1 text-[39px] whitespace-nowrap text-[#1d5490]">途经多个路灯照明路段，夜间视野较好</p>
      </div>
      <section className="mx-6 mt-2 rounded-[46px] bg-[linear-gradient(180deg,#edf2f8_0px,#f8faff_130px,#ffffff_230px)] px-9 pt-[52px] pb-[30px] shadow-[0_2px_16px_rgba(60,80,140,0.10)]">
        <div className="flex items-center px-6">
          <h1 className="flex gap-8 text-[55px] leading-[72px] font-medium text-[#17191b]">
            <span>12分钟</span>
            <span>788米</span>
          </h1>
          <span className={`ml-4 rounded-lg bg-[#e8eefb] px-[7px] text-[29px] leading-12 text-[#2b63da] ${CJK}`}>有灯81%</span>
        </div>
        <p className="mt-3 px-6 text-[38px] leading-14 text-[#636466]">途经1个十字路口</p>
        <div className="mt-[78px] flex gap-[22px]">
          <button type="button" className="h-30 w-[312px] rounded-full border-3 border-[#e4e5e6] bg-white pt-1 text-[48px] text-[#1a1c1e]">
            轻导航
          </button>
          <button type="button" className="flex h-30 flex-1 items-center justify-center gap-[18px] rounded-full bg-linear-to-r from-[#02cb9d] to-[#23e4bb] text-[48px] font-medium text-white">
            <svg width="44" height="46" viewBox="0 0 44 46" fill="none" stroke="#d8fff3" strokeWidth="4" strokeLinecap="round">
              <path d="M2 14 V10 Q2 3 9 3 H13 M31 3 H35 Q42 3 42 10 V14 M42 32 V36 Q42 43 35 43 H31 M13 43 H9 Q2 43 2 36 V32" />
              <text x="22" y="32" fontSize="25" fontWeight="700" fontFamily="Roboto, sans-serif" textAnchor="middle" fill="#d8fff3" stroke="none">
                AR
              </text>
            </svg>
            <span className="pt-1">开始步行导航</span>
          </button>
        </div>
      </section>
      <section className="mx-6 mt-6 rounded-t-[36px] bg-white pt-4 pr-[34px] pb-12 pl-9">
        <a href="#calories" className={`flex items-center justify-between text-[42px] leading-[62px] font-bold text-[#1a1c1e] ${CJK}`}>
          本次行程可消耗热量35大卡
          <svg width="30" height="36" viewBox="0 0 30 36" fill="none" stroke="#8b95a5" strokeWidth="3" strokeLinecap="round" strokeLinejoin="round">
            <path d="M6 4 L21 18 L6 32" />
          </svg>
        </a>
        <p className="mt-2.5 flex items-center gap-[15px] text-[36px] leading-14 text-[#636466]">
          <svg width="42" height="44" viewBox="0 0 42 44" stroke="#3dcda8" strokeWidth="1.5" fill="#6fe8ca" fillOpacity="0.25">
            <ellipse cx="21" cy="22" rx="8" ry="21" />
            <ellipse cx="21" cy="22" rx="8" ry="22" transform="rotate(60 21 22)" />
            <ellipse cx="21" cy="22" rx="8" ry="22" transform="rotate(-60 21 22)" />
          </svg>
          结合基础消耗、路面坡度等维度动态测算
        </p>
      </section>
    </main>
  );
}

export default function App() {
  return (
    <div className={`flex min-h-screen flex-col overflow-hidden bg-white ${SANS}`}>
      <div className="relative">
        <MapCanvas />
        <div className="relative">
          <StatusBar />
          <SearchCard />
          <MapControls />
        </div>
      </div>
      <RouteSheet />
      <footer className="relative flex h-12 items-start justify-center bg-white pt-[15px]">
        <span className="h-3 w-1/3 rounded-full bg-[#808080]" />
      </footer>
    </div>
  );
}
